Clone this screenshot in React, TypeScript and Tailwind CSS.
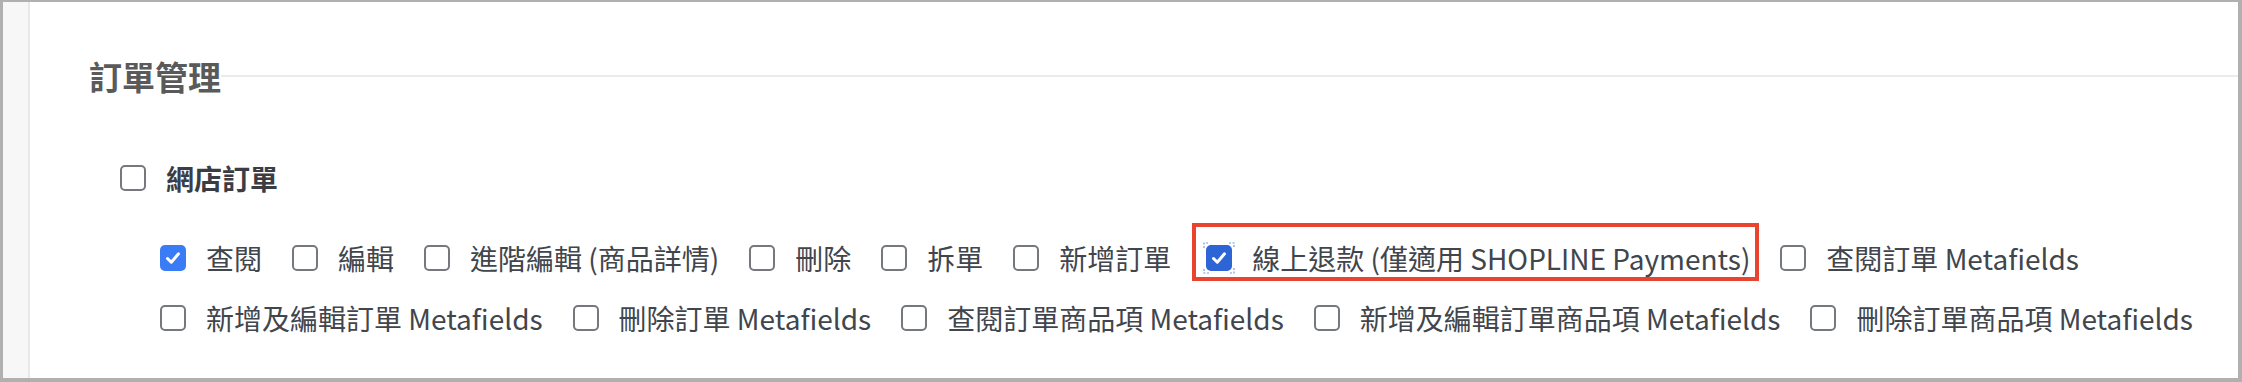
import React from "react";

const FONT = { fontFamily: '"Noto Sans CJK TC", "Noto Sans", sans-serif' };

function Box({ checked, tone = "bright" }: { checked?: boolean; tone?: "bright" | "deep" }) {
  if (checked) {
    return (
      <span
        className={
          "flex h-[26px] w-[26px] shrink-0 items-center justify-center rounded-[5px] " +
          (tone === "bright" ? "bg-[#3a7cf5]" : "bg-[#2d64d6]")
        }
      >
        <svg width="18" height="18" viewBox="0 0 18 18" fill="none">
          <path d="M3.5 9.5 L7.3 13.2 L14.5 4.8" stroke="white" strokeWidth="3" strokeLinecap="round" strokeLinejoin="round" />
        </svg>
      </span>
    );
  }
  return <span className="block h-[26px] w-[26px] shrink-0 rounded-[5px] border-2 border-[#75787d] bg-white" />;
}

function Item({ label, checked }: { label: string; checked?: boolean }) {
  return (
    <div className="flex h-[40px] items-center gap-[20px]">
      <Box checked={checked} />
      <span className="whitespace-nowrap text-[28px] leading-none text-[#41454c]">{label}</span>
    </div>
  );
}

function FocusItem({ label }: { label: string }) {
  return (
    <div className="relative ml-[5px] flex h-[40px] items-center gap-[20px]">
      <span className="relative">
        <Box checked tone="deep" />
        <svg className="pointer-events-none absolute -left-[3px] -top-[3px]" width="32" height="32" viewBox="0 0 32 32" fill="none">
          <path d="M1 6 V1 H6 M26 1 H31 V6 M31 26 V31 H26 M6 31 H1 V26" stroke="#6b9cf0" strokeWidth="1.2" strokeDasharray="2 1.5" />
        </svg>
      </span>
      <span className="whitespace-nowrap text-[28px] leading-none text-[#41454c]">{label}</span>
      <span className="pointer-events-none absolute -bottom-[3px] -left-[14px] -right-[9px] -top-[15px] border-[4px] border-[#e8442f]" />
    </div>
  );
}

export default function App() {
  return (
    <div style={FONT} className="flex h-[382px] w-[2242px] border-b-4 border-l-[3px] border-r-4 border-t-2 border-[#b0b0b0] bg-white">
      <div className="w-[27px] shrink-0 border-r-2 border-[#e8e8e8] bg-[#f7f7f7]" />
      <div className="flex min-w-0 flex-1 flex-col">
        <div className="mt-[54px] flex h-[40px] items-center pl-[59px]">
          <h2 className="whitespace-nowrap text-[33px] font-bold leading-none text-[#5a5a5a]">訂單管理</h2>
          <div className="h-[2px] flex-1 bg-[#ebebeb]" />
        </div>
        <div className="mt-[62px] flex h-[40px] items-center gap-[20px] pl-[90px]">
          <Box />
          <span className="text-[28px] font-bold leading-none text-[#3a3d44]">網店訂單</span>
        </div>
        <div className="mt-[40px] flex flex-col gap-[20px] pl-[130px]">
          <div className="flex items-center gap-x-[30px]">
            <Item label="查閱" checked />
            <Item label="編輯" />
            <Item label="進階編輯 (商品詳情)" />
            <Item label="刪除" />
            <Item label="拆單" />
            <Item label="新增訂單" />
            <FocusItem label="線上退款 (僅適用 SHOPLINE Payments)" />
            <Item label="查閱訂單 Metafields" />
          </div>
          <div className="flex items-center gap-x-[30px]">
            <Item label="新增及編輯訂單 Metafields" />
            <Item label="刪除訂單 Metafields" />
            <Item label="查閱訂單商品項 Metafields" />
            <Item label="新增及編輯訂單商品項 Metafields" />
            <Item label="刪除訂單商品項 Metafields" />
          </div>
        </div>
      </div>
    </div>
  );
}
